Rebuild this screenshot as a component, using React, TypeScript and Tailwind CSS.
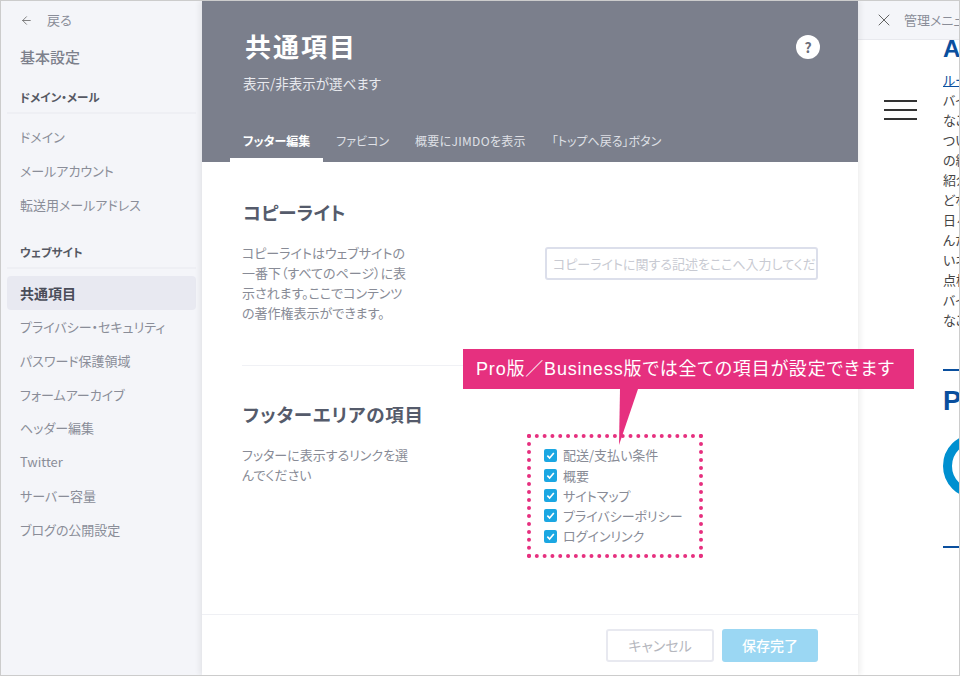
import { ArrowLeft, X } from 'lucide-react';

const jp = "font-['Noto_Sans_CJK_JP','Noto_Sans',sans-serif] [font-feature-settings:'palt']";

function NavItem({ label, active }: { label: string; active?: boolean }) {
  return (
    <div className={`h-[33.75px] mx-[6px] px-[13px] flex items-center rounded ${active ? 'bg-[#e8e9f1] text-[14px] font-bold text-[#4a4d59]' : 'text-[13px] text-[#8a8d98]'}`}>
      {label}
    </div>
  );
}

function NavHeading({ label, className }: { label: string; className: string }) {
  return (
    <div className={`h-[34px] mx-[6px] px-[13px] pt-[3px] flex items-center border-b-2 border-[#eeeff4] text-[11.5px] font-bold text-[#555863] ${className}`}>
      {label}
    </div>
  );
}

function Check({ label }: { label: string }) {
  return (
    <div className="h-[20.25px] flex items-center gap-[6px] text-[13px] text-[#888b96]">
      <span className="w-[13px] h-[13px] rounded-[2px] bg-[#1ba7e2] flex items-center justify-center shrink-0">
        <svg width="9" height="9" viewBox="0 0 10 10" fill="none" stroke="#fff" strokeWidth="1.8">
          <path d="M1.5 5.2 4 7.8 8.7 2.2" />
        </svg>
      </span>
      {label}
    </div>
  );
}

const tabs = [
  { label: 'フッター編集', cls: 'border-white font-bold text-white' },
  { label: 'ファビコン', cls: 'border-transparent text-[#dfe0e6]' },
  { label: '概要にJIMDOを表示', cls: 'border-transparent text-[#dfe0e6] tracking-[0.3px]' },
  { label: '「トップへ戻る」ボタン', cls: 'border-transparent text-[#dfe0e6]' },
];
const clipped = ['バイ', 'なこ', 'つい', 'の紹', '紹介', 'どな', '日々', 'んだ', 'いネ', '点検', 'バイ', 'なこ'];

export default function App() {
  return (
    <div className={`w-[960px] h-[676px] flex border border-[#cccccc] bg-white overflow-hidden ${jp}`}>
      {/* sidebar */}
      <aside className="w-[201px] shrink-0 bg-[#f4f5f9] flex flex-col">
        <div className="h-[38px] pl-[19px] flex items-center gap-[14px] text-[13px] text-[#8a8d98]">
          <ArrowLeft size={13} strokeWidth={1.5} className="text-[#666]" />
          戻る
        </div>
        <div className="h-[36px] pl-[19px] flex items-center text-[15px] font-medium text-[#7d808c]">基本設定</div>
        <NavHeading label="ドメイン・メール" className="mt-[5px] mb-[6px]" />
        <NavItem label="ドメイン" />
        <NavItem label="メールアカウント" />
        <NavItem label="転送用メールアドレス" />
        <NavHeading label="ウェブサイト" className="mt-[14px] mb-[7px]" />
        <NavItem label="共通項目" active />
        <NavItem label="プライバシー・セキュリティ" />
        <NavItem label="パスワード保護領域" />
        <NavItem label="フォームアーカイブ" />
        <NavItem label="ヘッダー編集" />
        <NavItem label="Twitter" />
        <NavItem label="サーバー容量" />
        <NavItem label="ブログの公開設定" />
      </aside>

      {/* main */}
      <main className="w-[656px] shrink-0 relative flex flex-col shadow-[-3px_0_5px_rgba(0,0,0,0.06),3px_0_5px_rgba(0,0,0,0.06)] z-10 bg-white">
        <header className="h-[161px] shrink-0 bg-[#7b7f8c] flex flex-col relative">
          <div className="flex justify-between items-start pl-[43px] pr-[38px] pt-[25px]">
            <h1 className="text-[26px] leading-[40px] font-bold tracking-[2px] text-white">共通項目</h1>
            <span className="w-[24px] h-[24px] mt-[9px] rounded-full bg-white flex items-center justify-center text-[14px] font-bold text-[#6b6e7a]">?</span>
          </div>
          <p className="pl-[41px] mt-[7px] text-[13.5px] leading-[20px] text-[#e8e9ee]">表示/非表示が選べます</p>
          <nav className="mt-auto pl-[28px] flex">
            {tabs.map((t) => (
              <div key={t.label} className={`h-[44px] px-[13px] pt-[6px] flex items-center text-[12px] border-b-4 ${t.cls}`}>
                {t.label}
              </div>
            ))}
          </nav>
        </header>

        <div className="flex-1 px-[40px] flex flex-col">
          <section className="pt-[37px] pb-[42px] border-b border-[#f0f1f5] flex">
            <div className="w-[303px] shrink-0">
              <h2 className="ml-px text-[18.5px] leading-[26px] font-bold text-[#555b6b]">コピーライト</h2>
              <p className="mt-[18px] w-[171px] text-[13px] leading-[20px] text-[#888b96]">
                コピーライトはウェブサイトの一番下（すべてのページ）に表示されます。ここでコンテンツの著作権表示ができます。
              </p>
            </div>
            <div className="w-[273px] h-[33px] mt-[48px] border-2 border-[#dcdfeb] rounded-[3px] px-[6px] flex items-center overflow-hidden whitespace-nowrap text-[13px] text-[#c8cad2]">
              コピーライトに関する記述をここへ入力してください
            </div>
          </section>

          <section className="pt-[35px] flex">
            <div className="w-[285px] shrink-0">
              <h2 className="ml-px text-[18.5px] tracking-[0.8px] leading-[26px] font-bold text-[#555b6b]">フッターエリアの項目</h2>
              <p className="mt-[18px] w-[175px] text-[13px] leading-[20px] text-[#888b96]">
                フッターに表示するリンクを選んでください
              </p>
            </div>
            <div className="w-[176px] h-[124px] mt-[33px] border-4 border-dotted border-[#e6307f] pl-[13px] pt-[7px]">
              <Check label="配送/支払い条件" />
              <Check label="概要" />
              <Check label="サイトマップ" />
              <Check label="プライバシーポリシー" />
              <Check label="ログインリンク" />
            </div>
          </section>
        </div>

        <footer className="h-[61px] shrink-0 border-t border-[#eff0f4] pr-[40px] flex items-center justify-end gap-[8px]">
          <button className="w-[108px] h-[33px] border-2 border-[#e8e9f0] rounded-[3px] text-[14px] text-[#b5b7be]">キャンセル</button>
          <button className="w-[96px] h-[33px] bg-[#9bd7f3] rounded-[3px] text-[14px] font-medium text-white">保存完了</button>
        </footer>

        {/* callout over the content */}
        <div className="absolute left-[261px] top-[348px] w-[451px] h-[40px] pr-[6px] bg-[#e6307f] flex items-center justify-center text-[18px] tracking-[0.8px] text-white font-['Liberation_Sans','Noto_Sans_CJK_JP',sans-serif]">
          Pro版／Business版では全ての項目が設定できます
          <svg className="absolute left-[153px] top-[40px]" width="24" height="57" viewBox="0 0 24 57">
            <path d="M4 0H22L3 56Z" fill="#e6307f" />
          </svg>
        </div>
      </main>

      {/* site preview behind the panel */}
      <div className="flex-1 min-w-0 flex flex-col overflow-hidden">
        <div className="h-[39px] shrink-0 bg-[#f4f5f9] border-b border-[#e8e9ee] pl-[16px] flex items-center gap-[10px] whitespace-nowrap text-[13px] text-[#8a8d98]">
          <X size={20} strokeWidth={1.1} className="shrink-0 text-[#555]" />
          管理メニュー
        </div>
        <div className="flex-1 flex overflow-hidden">
          <div className="w-[85px] shrink-0 pl-[26px] pt-[60px]">
            <div className="w-[33px] flex flex-col gap-[7px]">
              <div className="h-[2px] bg-[#333]" />
              <div className="h-[2px] bg-[#333]" />
              <div className="h-[2px] bg-[#333]" />
            </div>
          </div>
          <div className="flex-1 min-w-0 overflow-hidden whitespace-nowrap">
            <div className="h-[30px] -mt-[6px] text-[24px] leading-[30px] font-bold text-[#0a4f9e] font-['Liberation_Sans',sans-serif]">AB</div>
            <div className="h-[20px] mt-[6px] text-[13px] leading-[20px] text-[#0a4f9e] underline">ルール</div>
            {clipped.map((c, i) => (
              <div key={i} className="h-[20px] text-[13px] leading-[20px] text-[#444]">{c}</div>
            ))}
            <div className="h-[2px] mt-[39px] bg-[#0a4f9e]" />
            <div className="h-[34px] mt-[13px] text-[27px] leading-[34px] font-bold text-[#0a4f9e] font-['Liberation_Sans',sans-serif]">PR</div>
            <div className="w-[64px] h-[64px] mt-[16px] rounded-full border-[9px] border-[#0090d0] flex items-center justify-center">
              <div className="w-[30px] h-[30px] rounded-full border-[3px] border-[#0090d0]" />
            </div>
            <div className="h-[2px] mt-[48px] bg-[#0a4f9e]" />
          </div>
        </div>
      </div>
    </div>
  );
}
